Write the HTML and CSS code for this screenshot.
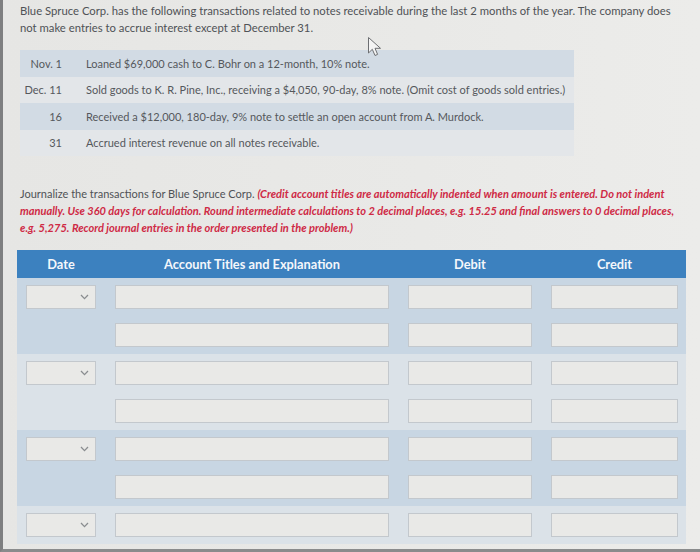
FILE: index.html
```html
<!DOCTYPE html>
<html>
<head>
<meta charset="utf-8">
<link rel="stylesheet" href="styles.css">
</head>
<body>
<div class="page">
  <p class="intro">Blue Spruce Corp. has the following transactions related to notes receivable during the last 2 months of the year. The company does<br>not make entries to accrue interest except at December 31.</p>

  <div class="tx">
    <div class="tx-row odd"><div class="tx-date">Nov. 1</div><div class="tx-desc">Loaned $69,000 cash to C. Bohr on a 12-month, 10% note.</div></div>
    <div class="tx-row even"><div class="tx-date">Dec. 11</div><div class="tx-desc">Sold goods to K. R. Pine, Inc., receiving a $4,050, 90-day, 8% note. (Omit cost of goods sold entries.)</div></div>
    <div class="tx-row odd"><div class="tx-date">16</div><div class="tx-desc">Received a $12,000, 180-day, 9% note to settle an open account from A. Murdock.</div></div>
    <div class="tx-row even"><div class="tx-date">31</div><div class="tx-desc">Accrued interest revenue on all notes receivable.</div></div>
  </div>

  <p class="instr">Journalize the transactions for Blue Spruce Corp. <span class="red">(Credit account titles are automatically indented when amount is entered. Do not indent<br>manually. Use 360 days for calculation. Round intermediate calculations to 2 decimal places, e.g. 15.25 and final answers to 0 decimal places,<br>e.g. 5,275. Record journal entries in the order presented in the problem.)</span></p>

  <div class="journal">
    <div class="jhead">
      <div>Date</div><div>Account Titles and Explanation</div><div>Debit</div><div>Credit</div>
    </div>

    <div class="group blue">
      <div class="jrow"><div class="sel"><svg width="9" height="6" viewBox="0 0 9 6"><polyline points="1,1 4.5,4.6 8,1" fill="none" stroke="#8a8d90" stroke-width="1.3"/></svg></div><div class="inp"></div><div class="inp"></div><div class="inp"></div></div>
      <div class="jrow"><div></div><div class="inp"></div><div class="inp"></div><div class="inp"></div></div>
    </div>
    <div class="group light">
      <div class="jrow"><div class="sel"><svg width="9" height="6" viewBox="0 0 9 6"><polyline points="1,1 4.5,4.6 8,1" fill="none" stroke="#8a8d90" stroke-width="1.3"/></svg></div><div class="inp"></div><div class="inp"></div><div class="inp"></div></div>
      <div class="jrow"><div></div><div class="inp"></div><div class="inp"></div><div class="inp"></div></div>
    </div>
    <div class="group blue">
      <div class="jrow"><div class="sel"><svg width="9" height="6" viewBox="0 0 9 6"><polyline points="1,1 4.5,4.6 8,1" fill="none" stroke="#8a8d90" stroke-width="1.3"/></svg></div><div class="inp"></div><div class="inp"></div><div class="inp"></div></div>
      <div class="jrow"><div></div><div class="inp"></div><div class="inp"></div><div class="inp"></div></div>
    </div>
    <div class="group light">
      <div class="jrow"><div class="sel"><svg width="9" height="6" viewBox="0 0 9 6"><polyline points="1,1 4.5,4.6 8,1" fill="none" stroke="#8a8d90" stroke-width="1.3"/></svg></div><div class="inp"></div><div class="inp"></div><div class="inp"></div></div>
    </div>
  </div>

  <svg class="cursor" width="16" height="22" viewBox="0 0 16 22"><path d="M1.5 1.5 L1.5 17 L5.3 13.3 L8 19.5 L10.6 18.4 L8 12.3 L13.5 12.3 Z" fill="#f4f4f4" stroke="#6d6f72" stroke-width="1" stroke-linejoin="round"/></svg>
</div>
</body>
</html>
```

FILE: styles.css
```css
html, body {
  margin: 0;
  padding: 0;
}
body {
  background: #e8e8e6;
  font-family: Lato, "Open Sans", sans-serif;
  color: #505357;
}
.page {
  position: relative;
  height: 549px;
  border-left: 3px solid #7e7f80;
  border-bottom: 3px solid #8a8b8c;
  background: linear-gradient(90deg, #e6e6e4 0%, #e9e9e7 60%, #ececea 100%);
  overflow: hidden;
}
.intro {
  margin: 0;
  padding: 2px 0 0 17px;
  font-size: 11.3px;
  line-height: 17px;
  color: #4f5256;
}
.tx {
  margin: 14px 0 0 17px;
  width: 554px;
}
.tx-row {
  display: flex;
  align-items: center;
  height: 26.5px;
  font-size: 11px;
  color: #55585c;
}
.tx-row.odd { background: #d2dbe4; }
.tx-row.even { background: #e3e6e9; }
.tx-date {
  width: 42px;
  text-align: right;
  flex: none;
}
.tx-desc {
  padding-left: 24px;
}
.instr {
  margin: 29px 0 0 17px;
  font-size: 11px;
  line-height: 17px;
  color: #4f5256;
}
.red {
  color: #cf2a45;
  font-style: italic;
  font-weight: 700;
  font-size: 11.05px;
}
.journal {
  margin: 14px 0 0 14px;
  width: 669px;
}
.jhead, .jrow {
  display: grid;
  grid-template-columns: 70px 274px 124px 127px;
  column-gap: 19px;
  padding: 0 8px 0 9px;
}
.jhead {
  height: 28px;
  align-items: center;
  background: #3c81bf;
  color: #f4f7fb;
  font-weight: 700;
  font-size: 12.8px;
  text-align: center;
}
.group.blue { background: #c8d6e3; }
.group.light { background: #dbe2e8; }
.jrow {
  height: 38px;
  align-items: center;
}
.inp, .sel {
  height: 22px;
  background: #e9e9e7;
  border: 1px solid #c3c8cd;
}
.sel {
  display: flex;
  align-items: center;
  justify-content: flex-end;
  padding-right: 6px;
  box-sizing: border-box;
  height: 24px;
}
.cursor {
  position: absolute;
  left: 364px;
  top: 36px;
}
```
